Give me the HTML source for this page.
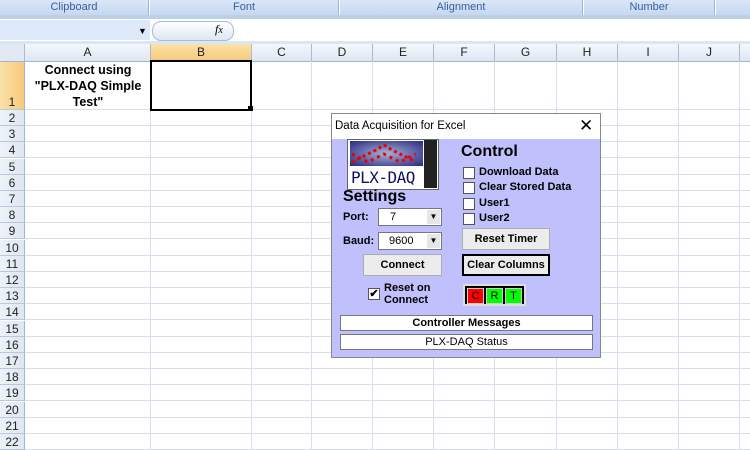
<!DOCTYPE html>
<html><head><style>
body{margin:0;width:750px;height:449px;overflow:hidden;background:#fff;font-family:"Liberation Sans",Arial,sans-serif;position:relative}
.a{position:absolute}
.rib{top:0;height:15px;background:linear-gradient(#dbe7f7,#c5d8f0);border-right:1px solid #9db5d8;color:#35609e;font-size:11px;text-align:center;line-height:15px}
.ch{top:44px;height:17px;background:linear-gradient(#f5f8fc,#dde6f2);border-right:1px solid #a9bcd6;border-bottom:1px solid #9eb6ce;font-size:12px;text-align:center;line-height:17px;color:#222}
.rh{left:0;width:24px;height:15px;background:linear-gradient(90deg,#eef3f9,#dde6f2);border-right:1px solid #9eb6ce;border-bottom:1px solid #b8c8dd;font-size:12px;text-align:center;line-height:16px;color:#222}
.hl{left:25px;right:0;height:1px;background:#d6dfec}
.vl{top:61px;bottom:0;width:1px;background:#d6dfec}
.dlg{left:331px;top:113px;width:268px;height:243px;border:1px solid #888;background:#c0c0fc;font-size:11px}
.btn{background:#ececec;border:1px solid #adadad;text-align:center;font-weight:bold;font-size:11px;box-sizing:border-box}
.cb{width:12px;height:12px;background:#fff;border:1px solid #555;box-sizing:border-box}
.lbl{font-weight:bold;font-size:11px}
.combo{background:#fff;border:1px solid #777;box-sizing:border-box;font-size:11px}
</style></head><body>
<div class="a rib" style="left:0;width:148px">Clipboard</div>
<div class="a rib" style="left:150px;width:188px">Font</div>
<div class="a rib" style="left:340px;width:242px">Alignment</div>
<div class="a rib" style="left:584px;width:130px">Number</div>
<div class="a rib" style="left:716px;width:34px"></div>
<div class="a" style="left:0;top:15px;width:750px;height:4px;background:#bcd0ea"></div>
<div class="a" style="left:0;top:19px;width:750px;height:22px;background:#fff;border-bottom:1px solid #a0b6d3"></div>
<div class="a" style="left:0;top:20px;width:150px;height:20px;background:#dde8f8"></div>
<div class="a" style="left:138px;top:26px;font-size:9px">▼</div>
<div class="a" style="left:152px;top:21px;width:80px;height:18px;border-radius:9px;background:linear-gradient(#fff,#dde6f2);border:1px solid #a9bcd6"></div>
<div class="a" style="left:215px;top:22px;font-style:italic;font-family:'Liberation Serif',serif;font-size:12px"><i>f</i><small>x</small></div>
<div class="a" style="left:0;top:41px;width:750px;height:3px;background:#dbe6f4"></div>
<div class="a ch" style="left:0;width:24px;background:#e0e8f3"></div>
<div class="a ch" style="left:25px;width:125px">A</div>
<div class="a ch" style="left:151px;width:100px;background:linear-gradient(#fbe1a9,#f8c97a)">B</div>
<div class="a ch" style="left:252px;width:59px">C</div>
<div class="a ch" style="left:312px;width:60px">D</div>
<div class="a ch" style="left:373px;width:60px">E</div>
<div class="a ch" style="left:434px;width:60px">F</div>
<div class="a ch" style="left:495px;width:61px">G</div>
<div class="a ch" style="left:557px;width:60px">H</div>
<div class="a ch" style="left:618px;width:60px">I</div>
<div class="a ch" style="left:679px;width:60px">J</div>
<div class="a ch" style="left:740px;width:10px"></div>
<div class="a vl" style="left:150px"></div><div class="a vl" style="left:251px"></div><div class="a vl" style="left:311px"></div><div class="a vl" style="left:372px"></div><div class="a vl" style="left:433px"></div><div class="a vl" style="left:494px"></div><div class="a vl" style="left:556px"></div><div class="a vl" style="left:617px"></div><div class="a vl" style="left:678px"></div><div class="a vl" style="left:739px"></div>
<div class="a rh" style="top:62px;height:47px;line-height:80px;background:linear-gradient(90deg,#fbe1a9,#f8c97a)">1</div>
<div class="a hl" style="top:109px"></div>
<div id="rows"></div>
<script>
var h='';for(var k=2;k<=22;k++){var t=110+Math.round((k-2)*16.2);h+='<div class="a rh" style="top:'+t+'px">'+k+'</div><div class="a hl" style="top:'+(t+15)+'px"></div>';}document.getElementById('rows').innerHTML=h;
</script>
<div class="a" style="left:26px;top:62px;width:124px;text-align:center;font-weight:bold;font-size:12.5px;line-height:16px">Connect using "PLX-DAQ Simple Test"</div>
<div class="a" style="left:150px;top:60px;width:98px;height:47px;border:2px solid #000"></div>
<div class="a" style="left:248px;top:106px;width:5px;height:5px;background:#000"></div>

<div class="a dlg">
 <div class="a" style="left:0;top:0;width:268px;height:25px;background:#fff"></div>
 <div class="a" style="left:3px;top:6px;font-size:11.5px">Data Acquisition for Excel</div>
 <div class="a" style="left:247px;top:2px;font-size:17px">✕</div>
 <div class="a" style="left:15px;top:25px;width:90px;height:49px;background:#fff;border:1px solid #666"></div>
 <div class="a" style="left:18px;top:27px;width:73px;height:25px;background:radial-gradient(ellipse at center,#a8b0d8,#252a80)"></div>
 <svg class="a" style="left:18px;top:27px" width="73" height="25"><polyline points="2,21 10,17 18,13 26,9 34,4 42,9 50,13 58,17 66,21" fill="none" stroke="#e00" stroke-width="3" stroke-dasharray="3,3"/><polyline points="2,13 10,17 18,21 26,17 34,13 42,17 50,21 58,17 66,13" fill="none" stroke="#e00" stroke-width="3" stroke-dasharray="3,4"/></svg>
 <div class="a" style="left:19px;top:54px;font-size:16px;color:#101060;font-family:'DejaVu Sans Mono',monospace;letter-spacing:-0.5px">PLX-DAQ</div>
 <div class="a" style="left:92px;top:26px;width:13px;height:48px;background:#222"></div>
 <div class="a" style="left:11px;top:74px;font-size:16px;font-weight:bold">Settings</div>
 <div class="a" style="left:129px;top:29px;font-size:16px;font-weight:bold">Control</div>
 <div class="a cb" style="left:131px;top:53px"></div><div class="a lbl" style="left:147px;top:52px">Download Data</div>
 <div class="a cb" style="left:131px;top:68px"></div><div class="a lbl" style="left:147px;top:67px">Clear Stored Data</div>
 <div class="a cb" style="left:131px;top:84px"></div><div class="a lbl" style="left:147px;top:83px">User1</div>
 <div class="a cb" style="left:131px;top:99px"></div><div class="a lbl" style="left:147px;top:98px">User2</div>
 <div class="a lbl" style="left:11px;top:97px">Port:</div>
 <div class="a combo" style="left:46px;top:94px;width:64px;height:18px;padding:2px 0 0 11px">7<span class="a" style="right:1px;top:1px;width:13px;height:14px;background:#e6e6e6;font-size:8px;text-align:center;line-height:14px">▼</span></div>
 <div class="a lbl" style="left:11px;top:121px">Baud:</div>
 <div class="a combo" style="left:46px;top:118px;width:64px;height:18px;padding:2px 0 0 10px">9600<span class="a" style="right:1px;top:1px;width:13px;height:14px;background:#e6e6e6;font-size:8px;text-align:center;line-height:14px">▼</span></div>
 <div class="a btn" style="left:31px;top:140px;width:79px;height:22px;line-height:20px">Connect</div>
 <div class="a btn" style="left:130px;top:114px;width:88px;height:22px;line-height:20px">Reset Timer</div>
 <div class="a btn" style="left:130px;top:140px;width:88px;height:22px;line-height:18px;border:2px solid #000">Clear Columns</div>
 <div class="a cb" style="left:36px;top:174px;font-size:11px;line-height:10px;text-align:center;font-weight:bold">✔</div>
 <div class="a lbl" style="left:52px;top:168px;line-height:12px">Reset on<br>Connect</div>
 <div class="a" style="left:131px;top:170px;width:63px;height:22px;background:#ddd"></div>
 <div class="a" style="left:133px;top:172px;width:59px;height:18px;background:#000"></div>
 <div class="a" style="left:135px;top:174px;width:15px;height:14px;background:#f00;border:1px solid #ccc;font-size:11px;text-align:center;line-height:14px">C</div>
 <div class="a" style="left:154px;top:174px;width:15px;height:14px;background:#0f0;border:1px solid #ccc;font-size:11px;text-align:center;line-height:14px">R</div>
 <div class="a" style="left:173px;top:174px;width:15px;height:14px;background:#0f0;border:1px solid #ccc;font-size:11px;text-align:center;line-height:14px">T</div>
 <div class="a" style="left:8px;top:201px;width:251px;height:14px;background:#fff;border:1px solid #777;text-align:center;font-weight:bold;line-height:14px">Controller Messages</div>
 <div class="a" style="left:8px;top:220px;width:251px;height:14px;background:#fff;border:1px solid #777;text-align:center;line-height:14px">PLX-DAQ Status</div>
</div>
</body></html>
